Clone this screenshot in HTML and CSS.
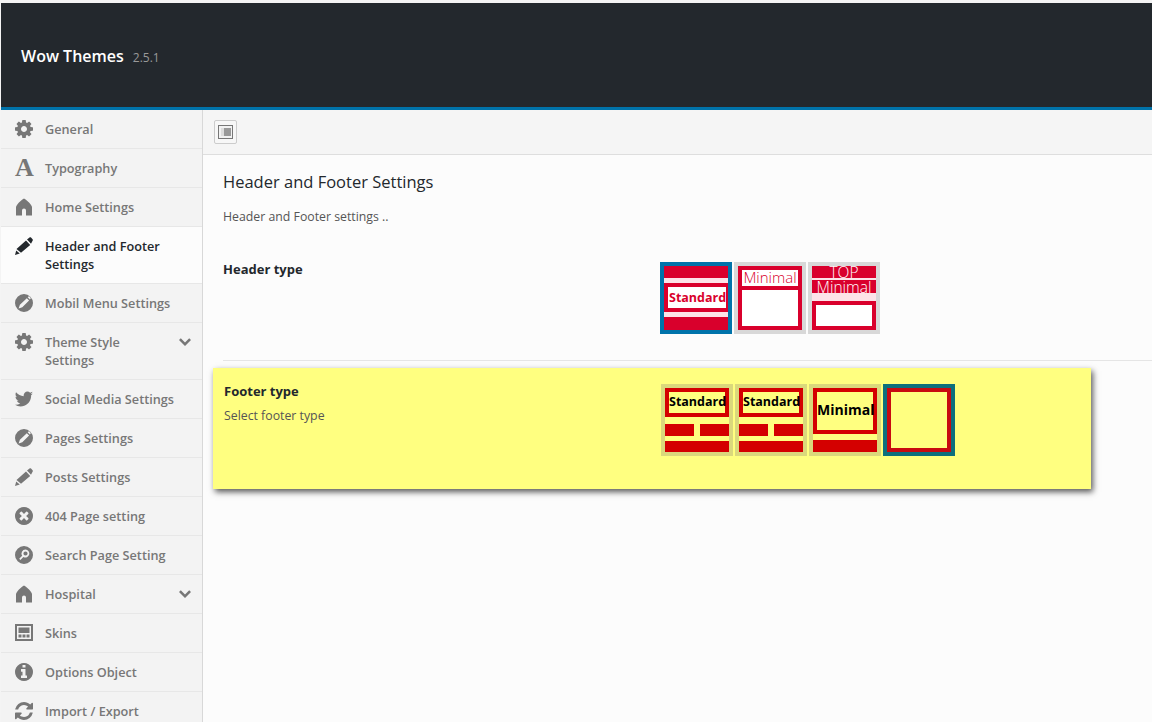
FILE: index.html
```html
<!DOCTYPE html>
<html>

  <head>
    <title>Wow Themes Options</title>
    <link rel="stylesheet" href="styles.css">
  </head>

  <body>
    <svg class="defs" width="0" height="0">
      <symbol id="i-cog" viewBox="128 128 1536 1536"><path d="M1152 896q0-106-75-181t-181-75-181 75-75 181 75 181 181 75 181-75 75-181zm512-109v222q0 12-8 23t-20 13l-185 28q-19 54-39 91 35 50 107 138 10 12 10 25t-9 23q-27 37-99 108t-94 71q-12 0-26-9l-138-108q-44 23-91 38-16 136-29 186-7 28-36 28h-222q-14 0-24.500-8.500t-11.500-21.500l-28-184q-49-16-90-37l-141 107q-10 9-25 9-14 0-25-11-126-114-165-168-7-10-7-23 0-12 8-23 15-21 51-66.500t54-70.500q-27-50-41-99l-183-27q-13-2-21-12.500t-8-23.500v-222q0-12 8-23t19-13l186-28q14-46 39-92-40-57-107-138-10-12-10-24 0-10 9-23 26-36 98.500-107.500t94.500-71.500q13 0 26 10l138 107q44-23 91-38 16-136 29-186 7-28 36-28h222q14 0 24.500 8.500t11.500 21.500l28 184q49 16 90 37l142-107q9-9 24-9 13 0 25 10 129 119 165 170 7 8 7 22 0 12-8 23-15 21-51 66.500t-54 70.500q26 50 41 98l183 28q13 2 21 12.500t8 23.500z"/></symbol>
      <symbol id="i-home" viewBox="0 0 18 18"><path d="M9 .5C7 1.800 4.200 3.800 2.500 6.200 1.500 7.500 1 8.500 1 9.500v8h6v-5a2 2 0 0 1 4 0v5h6v-8c0-1-.5-2-1.500-3.300C13.800 3.800 11 1.800 9 .5z"/></symbol>
      <symbol id="i-pencil" viewBox="0 0 18 18"><path d="M1.500 12L11 3.500l4.200 4.500L6 15.800zM0 18l1.200-4.500 3.600 3zM12 2.500L14.500.5c.5-.4 1.100-.4 1.500 0l1.600 1.700c.4.500.4 1.100 0 1.500L16 6.800z"/></symbol>
      <symbol id="i-circle-pencil" viewBox="0 0 18 18"><path fill-rule="evenodd" d="M9 0a9 9 0 1 1 0 18A9 9 0 0 1 9 0zm2.800 4.200L4.900 10.800l-1.300 3.600 3.700-1.200 6.800-6.600zm.9-.9l2.100 2.200.7-.7c.3-.3.300-.7 0-1l-1.100-1.200c-.3-.3-.7-.3-1 0z"/></symbol>
      <symbol id="i-twitter" viewBox="128 256 1556 1280"><path d="M1684 408q-67 98-162 167 1 14 1 42 0 130-38 259.500t-115.500 248.500-184.500 210.500-258 146-323 54.500q-271 0-496-145 35 4 78 4 225 0 401-138-105-2-188-64.500t-114-159.500q33 5 61 5 43 0 85-11-112-23-185.500-111.500t-73.500-205.500v-4q68 38 146 41-66-44-105-115t-39-154q0-88 44-163 121 149 294.500 238.500t371.500 99.500q-8-38-8-74 0-134 94.500-228.500t228.500-94.500q140 0 236 102 109-21 205-78-37 115-142 182 93-10 186-50z"/></symbol>
      <symbol id="i-times" viewBox="128 128 1536 1536"><path d="M1277 1122q0-26-19-45l-181-181 181-181q19-19 19-45 0-27-19-46l-90-90q-19-19-46-19-26 0-45 19l-181 181-181-181q-19-19-45-19-27 0-46 19l-90 90q-19 19-19 46 0 26 19 45l181 181-181 181q-19 19-19 45 0 27 19 46l90 90q19 19 46 19 26 0 45-19l181-181 181 181q19 19 45 19 27 0 46-19l90-90q19-19 19-46zm387-226q0 209-103 385.500t-279.500 279.500-385.500 103-385.500-103-279.500-279.500-103-385.500 103-385.500 279.500-279.500 385.500-103 385.500 103 279.500 279.500 103 385.500z"/></symbol>
      <symbol id="i-search" viewBox="0 0 18 18"><path fill-rule="evenodd" d="M9 0a9 9 0 1 1 0 18A9 9 0 0 1 9 0zm1.500 3.500a4 4 0 0 0-3.300 6.300l-3 3 1.200 1.200 3-3a4 4 0 1 0 2.100-7.500zm0 1.900a2.100 2.100 0 1 1 0 4.200 2.100 2.100 0 0 1 0-4.200z"/></symbol>
      <symbol id="i-skins" viewBox="0 0 18 18"><path fill-rule="evenodd" d="M0 0h18v17H0zM2 2v13h14V2zM3.500 3.500h11V9h-11zM3.500 10.500h3v3h-3zM7.500 10.500h3v3h-3zM11.500 10.500h3v3h-3z"/></symbol>
      <symbol id="i-info" viewBox="128 128 1536 1536"><path d="M1152 1376v-160q0-14-9-23t-23-9h-96v-512q0-14-9-23t-23-9h-320q-14 0-23 9t-9 23v160q0 14 9 23t23 9h96v320h-96q-14 0-23 9t-9 23v160q0 14 9 23t23 9h448q14 0 23-9t9-23zm-128-896v-160q0-14-9-23t-23-9h-192q-14 0-23 9t-9 23v160q0 14 9 23t23 9h192q14 0 23-9t9-23zm640 416q0 209-103 385.500t-279.500 279.500-385.500 103-385.500-103-279.500-279.500-103-385.500 103-385.500 279.500-279.500 385.500-103 385.500 103 279.500 279.500 103 385.500z"/></symbol>
      <symbol id="i-refresh" viewBox="128 128 1536 1536"><path d="M1639 1056q0 5-1 7-64 268-268 434.500t-478 166.500q-146 0-282.500-55t-243.500-157l-129 129q-19 19-45 19t-45-19-19-45v-448q0-26 19-45t45-19h448q26 0 45 19t19 45-19 45l-137 137q71 66 161 102t187 36q134 0 250-65t186-179q11-17 53-117 8-23 30-23h192q13 0 22.500 9.500t9.500 22.500zm25-800v448q0 26-19 45t-45 19h-448q-26 0-45-19t-19-45 19-45l138-138q-148-137-349-137-134 0-250 65t-186 179q-11 17-53 117-8 23-30 23h-199q-13 0-22.500-9.500t-9.500-22.500v-7q65-268 270-434.500t480-166.500q146 0 284 55.500t245 156.500l130-129q19-19 45-19t45 19 19 45z"/></symbol>
      <symbol id="i-chevron" viewBox="0 0 12 8"><path d="M0 2l1.800-1.800L6 4.400 10.200.2 12 2 6 8z"/></symbol>
    </svg>

    <div class="topbar">
      <span class="brand">Wow Themes</span>
      <span class="version">2.5.1</span>
    </div>

    <div class="wrap">
      <ul class="menu">
        <li class="item"><svg class="ico"><use href="#i-cog"/></svg><span class="label">General</span></li>
        <li class="item"><span class="ico ico-letter">A</span><span class="label">Typography</span></li>
        <li class="item"><svg class="ico"><use href="#i-home"/></svg><span class="label">Home Settings</span></li>
        <li class="item active"><svg class="ico"><use href="#i-pencil"/></svg><span class="label">Header and Footer Settings</span></li>
        <li class="item"><svg class="ico"><use href="#i-circle-pencil"/></svg><span class="label">Mobil Menu Settings</span></li>
        <li class="item has-sub"><svg class="ico"><use href="#i-cog"/></svg><span class="label">Theme Style Settings</span><svg class="chev"><use href="#i-chevron"/></svg></li>
        <li class="item"><svg class="ico"><use href="#i-twitter"/></svg><span class="label">Social Media Settings</span></li>
        <li class="item"><svg class="ico"><use href="#i-circle-pencil"/></svg><span class="label">Pages Settings</span></li>
        <li class="item"><svg class="ico"><use href="#i-pencil"/></svg><span class="label">Posts Settings</span></li>
        <li class="item"><svg class="ico"><use href="#i-times"/></svg><span class="label">404 Page setting</span></li>
        <li class="item"><svg class="ico"><use href="#i-search"/></svg><span class="label">Search Page Setting</span></li>
        <li class="item has-sub"><svg class="ico"><use href="#i-home"/></svg><span class="label">Hospital</span><svg class="chev"><use href="#i-chevron"/></svg></li>
        <li class="item"><svg class="ico"><use href="#i-skins"/></svg><span class="label">Skins</span></li>
        <li class="item"><svg class="ico"><use href="#i-info"/></svg><span class="label">Options Object</span></li>
        <li class="item"><svg class="ico"><use href="#i-refresh"/></svg><span class="label">Import / Export</span></li>
      </ul>

      <div class="main">
        <div class="toolbar">
          <div class="tool-btn"><span class="tool-icon"></span></div>
        </div>

        <div class="content">
          <h2 class="section-title">Header and Footer Settings</h2>
          <p class="section-desc">Header and Footer settings ..</p>

          <div class="row row-header">
            <div class="row-label"><strong>Header type</strong></div>
            <div class="thumbs">
              <div class="thumb selected">
                <div class="band red h12"></div>
                <div class="band pale h5"></div>
                <div class="band red h29 inset"><div class="box std">Standard</div></div>
                <div class="band pale h5"></div>
                <div class="band red grow"></div>
              </div>
              <div class="thumb solid">
                <div class="box min h16">Minimal</div>
                <div class="box grow"></div>
              </div>
              <div class="thumb">
                <div class="band red h12 inv">TOP</div>
                <div class="band pale h2"></div>
                <div class="band red h13 inv low">Minimal</div>
                <div class="band pale h8"></div>
                <div class="band red grow inset"><div class="box"></div></div>
              </div>
            </div>
          </div>

          <div class="row panel">
            <div class="row-label">
              <strong>Footer type</strong>
              <span class="row-desc">Select footer type</span>
            </div>
            <div class="thumbs">
              <div class="thumb foot">
                <div class="frame f30">Standard</div>
                <div class="blocks"><span></span><span></span></div>
                <div class="block"></div>
              </div>
              <div class="thumb foot">
                <div class="frame f30">Standard</div>
                <div class="blocks"><span></span><span></span></div>
                <div class="block"></div>
              </div>
              <div class="thumb foot">
                <div class="frame f46">Minimal</div>
                <div class="block b12"></div>
              </div>
              <div class="thumb foot selected">
                <div class="frame grow"></div>
              </div>
            </div>
          </div>
        </div>
      </div>
    </div>
  </body>

</html>
```

FILE: styles.css
```css
* {
  box-sizing: border-box;
}

html, body {
  height: 100%;
  overflow: hidden;
}

body {
  margin: 0;
  padding: 3px 0 0 1px;
  background-color: #f4f4f4;
  font-family: "Open Sans", "Noto Sans", sans-serif;
  font-size: 12.3px;
  line-height: 18px;
  color: #555;
}

.defs {
  position: absolute;
}

.topbar {
  height: 107px;
  background-color: #23282d;
  border-bottom: 3px solid #0073aa;
  padding: 44px 0 0 20px;
  display: flex;
  align-items: baseline;
  color: #fff;
}

.brand {
  font-size: 16px;
  font-weight: 600;
}

.version {
  font-size: 12px;
  color: #999;
  margin-left: 9px;
}

.wrap {
  display: flex;
  height: 612px;
  overflow: hidden;
}

/* sidebar */
.menu {
  width: 202px;
  flex: none;
  margin: 0;
  padding: 0;
  list-style: none;
  background-color: #f3f3f3;
  border-right: 1px solid #d8d8d8;
}

.item {
  display: flex;
  align-items: flex-start;
  padding: 10px 11px 10px 14px;
  border-bottom: 1px solid #e7e7e7;
  font-size: 12.7px;
  font-weight: 600;
  color: #777;
}

.item.active {
  background-color: #fcfcfc;
  color: #23282d;
}

.ico {
  width: 18px;
  height: 18px;
  flex: none;
  fill: currentColor;
  margin-right: 12px;
}

.ico-letter {
  font-family: "Liberation Serif", serif;
  font-size: 26px;
  font-weight: 700;
  line-height: 18px;
  text-align: center;
}

.label {
  flex: 1;
}

.has-sub .label {
  padding-right: 22px;
}

.chev {
  width: 12px;
  height: 8px;
  flex: none;
  fill: currentColor;
  margin: 5px 0 0 0;
}

/* main area */
.main {
  flex: 1;
  min-width: 0;
  background-color: #fcfcfc;
}

.toolbar {
  height: 45px;
  background-color: #f5f5f5;
  border-bottom: 1px solid #dedede;
  padding: 10px 0 0 11px;
}

.tool-btn {
  width: 23px;
  height: 24px;
  background-color: #f7f7f7;
  border: 1px solid #ccc;
  border-radius: 2px;
  padding: 4px 3px;
}

.tool-icon {
  display: block;
  width: 15px;
  height: 14px;
  border: 1px solid #777;
  background-color: #f2f2f2;
  padding: 2px 1px 2px 2px;
}

.tool-icon::after {
  content: "";
  display: block;
  box-sizing: border-box;
  width: 10px;
  height: 8px;
  border-left: 3px solid #ddd;
  background-color: #999;
}

.content {
  padding: 16px 0 0 20px;
}

.section-title {
  margin: 0;
  font-size: 16.5px;
  font-weight: 500;
  line-height: 22px;
  color: #23282d;
}

.section-desc {
  margin: 15px 0 0;
  line-height: 18px;
}

.row {
  display: flex;
}

.row-header {
  margin-top: 36px;
  padding-bottom: 26px;
  border-bottom: 1px solid #e5e5e5;
}

.row-label {
  width: 437px;
  flex: none;
  margin-top: -2px;
}

.row-label strong {
  display: block;
  font-size: 13px;
  font-weight: 700;
  color: #23282d;
}

.row-desc {
  display: block;
  margin-top: 7px;
}

.panel {
  width: 878px;
  height: 121px;
  margin: 7px 0 0 -10px;
  padding: 16px 0 0 11px;
  background-color: #ffff80;
  box-shadow: 2px 3px 6px rgba(0, 0, 0, .65);
}

.thumbs {
  display: flex;
  gap: 2px;
}

/* layout thumbnails */
.thumb {
  width: 72px;
  height: 72px;
  flex: none;
  display: flex;
  flex-direction: column;
  border: 4px solid #d8d8d8;
  background-color: #fff;
  color: #d9002c;
}

.thumb.selected {
  border-color: #0073aa;
}

.band {
  flex: none;
  text-align: center;
}

.red {
  background-color: #d9002c;
}

.pale {
  background-color: #fde3e8;
}

.h2 { height: 2px; }
.h5 { height: 5px; }
.h8 { height: 8px; }
.h12 { height: 12px; }
.h13 { height: 13px; }
.h29 { height: 29px; }

.grow {
  flex: 1;
}

.inset {
  display: flex;
  padding: 4px;
}

.inset .box {
  flex: 1;
}

.inv {
  color: #fff;
  font-size: 15.5px;
  line-height: 13px;
  font-weight: 300;
}

.low {
  line-height: 15px;
}

.box {
  background-color: #fff;
  text-align: center;
  white-space: nowrap;
}

.std {
  font-size: 12.5px;
  font-weight: 700;
  line-height: 21px;
  text-align: left;
  padding-left: 1px;
}

.solid {
  background-color: #d9002c;
  padding: 4px;
  gap: 4px;
}

.min {
  font-size: 15px;
  font-weight: 300;
  line-height: 15px;
}

.h16 {
  height: 16px;
  flex: none;
}

/* footer thumbnails sit on the yellow panel */
.foot {
  background-color: #ffff80;
  border-color: #dad87c;
  color: #000;
}

.foot.selected {
  border-color: #0e6f7c;
}

.frame {
  flex: none;
  border: 4px solid #d40000;
  font-weight: 700;
  text-align: center;
  white-space: nowrap;
}

.f30 {
  height: 29px;
  font-size: 12.5px;
  line-height: 19px;
}

.f46 {
  height: 46px;
  font-size: 14px;
  line-height: 36px;
}

.frame.grow {
  flex: 1;
  border-color: #c80a10;
}

.blocks {
  display: flex;
  justify-content: space-between;
  margin-top: 7px;
}

.blocks span {
  width: 29px;
  height: 12px;
  background-color: #d40000;
}

.block {
  height: 11px;
  margin-top: 5px;
  background-color: #d40000;
}

.b12 {
  height: 12px;
  margin-top: 6px;
}
```
